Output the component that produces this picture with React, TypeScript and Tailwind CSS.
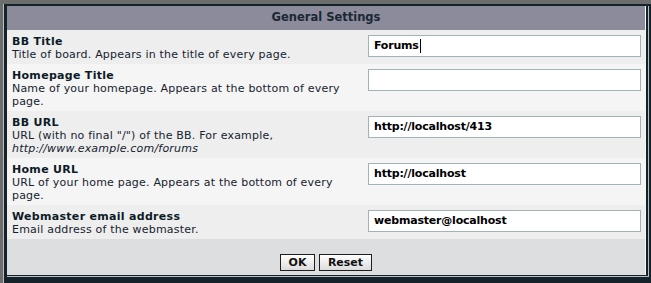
import React from "react";

const rows = [
    {
        label: "BB Title",
        desc: <>Title of board. Appears in the title of every page.</>,
        value: "Forums",
        caret: true,
        bg: "bg-[#eeeeee]",
    },
    {
        label: "Homepage Title",
        desc: <>Name of your homepage. Appears at the bottom of every page.</>,
        value: "",
        bg: "bg-[#f5f5f5]",
    },
    {
        label: "BB URL",
        desc: (
            <>
                URL (with no final "/") of the BB. For example, <i>http://www.example.com/forums</i>
            </>
        ),
        value: "http://localhost/413",
        bg: "bg-[#eeeeee]",
    },
    {
        label: "Home URL",
        desc: <>URL of your home page. Appears at the bottom of every page.</>,
        value: "http://localhost",
        bg: "bg-[#f5f5f5]",
    },
    {
        label: "Webmaster email address",
        desc: <>Email address of the webmaster.</>,
        value: "webmaster@localhost",
        bg: "bg-[#eeeeee]",
    },
];

export default function App() {
    return (
        <div className="h-[283px] w-[651px] overflow-hidden bg-[#6d6d6d] pl-[3px] pt-[4px] font-['DejaVu_Sans',Verdana,sans-serif] text-[11px] text-[#15232e]">
            <div className="h-full border-l border-[#b5bfc3] bg-[#16222a] pl-[3px] pt-[2px] pr-[2px]">
                <div className="border-r border-b border-[#b5bfc3]">
                    <div className="border-r-2 border-b border-[#16222a]">
                        <div className="border-r border-[#f4f6f7]">
                            {/* header */}
                            <div className="flex h-[24px] items-center justify-center bg-[#8b8b9b] text-[11.5px] font-bold text-[#1c2833]">
                                General Settings
                            </div>

                            {rows.map((r) => (
                                <div key={r.label} className={`flex ${r.bg}`}>
                                    <div className="w-[355px] pl-[5px] pr-[6px] pt-[5px] pb-[3px] leading-[13px]">
                                        <div className="font-bold tracking-[0.3px] text-[#0d1b27]">{r.label}</div>
                                        <div className="tracking-[0.2px]">{r.desc}</div>
                                    </div>
                                    <div className="flex-1 pl-[6px] pr-[2px] pt-[5px]">
                                        <div className="flex h-[22px] w-[273px] items-center border border-[#a2b2b9] bg-white pl-[5px] text-[11px] font-bold tracking-[-0.2px] text-black">
                                            {r.value}
                                            {r.caret && <span className="ml-px inline-block h-[14px] w-px bg-black" />}
                                        </div>
                                    </div>
                                </div>
                            ))}

                            {/* footer */}
                            <div className="flex justify-center gap-[4px] bg-[#dcdee0] pt-[15px] pb-[4px]">
                                <button className="h-[17px] w-[35px] border border-[#1f1f1f] bg-gradient-to-b from-white to-[#dcdcdc] text-[11px] font-bold leading-none text-[#111]">
                                    OK
                                </button>
                                <button className="h-[17px] w-[53px] border border-[#1f1f1f] bg-gradient-to-b from-white to-[#dcdcdc] text-[11px] font-bold leading-none text-[#111]">
                                    Reset
                                </button>
                            </div>
                        </div>
                    </div>
                </div>
            </div>
        </div>
    );
}
